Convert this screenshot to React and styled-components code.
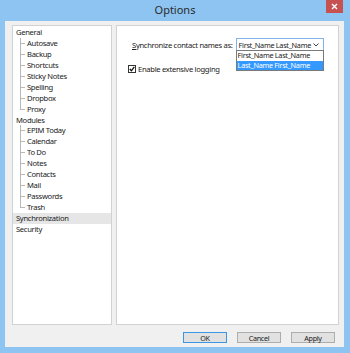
import styled, { createGlobalStyle } from "styled-components";

const Global = createGlobalStyle`
  html, body { margin: 0; padding: 0; }
  body {
    width: 350px;
    height: 353px;
    overflow: hidden;
    font-family: "Noto Sans", "Open Sans", sans-serif;
  }
`;

const Window = styled.div`
  width: 350px;
  height: 353px;
  background: #8dc4f1;
  display: flex;
  flex-direction: column;
  box-sizing: border-box;
  position: relative;
`;

const TitleBar = styled.div`
  height: 21px;
  display: flex;
  align-items: center;
  justify-content: center;
  font-size: 11px;
  color: #2b2b2b;
  padding-bottom: 3px;
  box-sizing: border-box;
`;

const CloseButton = styled.div`
  position: absolute;
  top: 0;
  right: 7px;
  width: 17px;
  height: 13px;
  background: #c75050;
  display: flex;
  align-items: center;
  justify-content: center;
`;

const Body = styled.div`
  flex: 1;
  margin: 0 6px 6px 5px;
  background: #f0f0f0;
  display: flex;
  flex-direction: column;
  padding: 4px 5px 4px 7px;
  box-sizing: border-box;
  font-size: 7.6px;
  letter-spacing: -0.3px;
  color: #1a1a1a;
`;

const Panels = styled.div`
  display: flex;
  gap: 4px;
  height: 300px;
`;

const TreePanel = styled.div`
  width: 100px;
  background: #fff;
  border: 1px solid #d2d2d2;
  box-sizing: border-box;
  padding-top: 1px;
`;

const TreeItem = styled.div`
  height: 10.95px;
  line-height: 10.95px;
  padding-left: ${(p) => (p.$child ? 14 : 3)}px;
  background: ${(p) => (p.$selected ? "#e6e6e6" : "transparent")};
  position: relative;
  white-space: nowrap;

  &::before {
    content: ${(p) => (p.$child ? '""' : "none")};
    position: absolute;
    left: 7px;
    top: 5px;
    width: 5px;
    border-top: 1px solid #b8b8b8;
  }
  &::after {
    content: ${(p) => (p.$child ? '""' : "none")};
    position: absolute;
    left: 7px;
    top: 0;
    height: ${(p) => (p.$last ? "5px" : "100%")};
    border-left: 1px solid #b8b8b8;
  }
`;

const ContentPanel = styled.div`
  flex: 1;
  background: #fff;
  border: 1px solid #d2d2d2;
  box-sizing: border-box;
  padding: 12px 0 0 11px;
  display: flex;
  flex-direction: column;
  gap: 13px;
`;

const SyncRow = styled.div`
  display: flex;
  align-items: center;
  gap: 3px;
  padding-left: 4px;
`;

const Label = styled.span`
  white-space: nowrap;
`;

const Key = styled.span`
  text-decoration: underline;
`;

const SelectWrap = styled.div`
  position: relative;
  font-size: 7.3px;
`;

const SelectBox = styled.div`
  width: 88px;
  height: 13px;
  box-sizing: border-box;
  border: 1px solid #7eb4ea;
  background: #fff;
  display: flex;
  align-items: center;
  justify-content: space-between;
  padding: 0 4px 0 2px;
  white-space: nowrap;
`;

const DropList = styled.div`
  position: absolute;
  top: 12px;
  left: 0;
  width: 88px;
  box-sizing: border-box;
  border: 1px solid #7a7a7a;
  background: #fff;
`;

const Option = styled.div`
  height: 9.5px;
  line-height: 9.5px;
  padding-left: 1px;
  white-space: nowrap;
  background: ${(p) => (p.$active ? "#3399ff" : "#fff")};
  color: ${(p) => (p.$active ? "#fff" : "#1a1a1a")};
`;

const CheckRow = styled.div`
  display: flex;
  align-items: center;
  gap: 2px;
`;

const Box = styled.div`
  width: 8px;
  height: 8px;
  box-sizing: border-box;
  border: 1px solid #333;
  background: #fff;
  display: flex;
  align-items: center;
  justify-content: center;
`;

const Buttons = styled.div`
  display: flex;
  justify-content: flex-end;
  gap: 10px;
  margin-top: 7px;
  padding-right: 4px;
`;

const Button = styled.div`
  width: 44px;
  height: 11px;
  box-sizing: border-box;
  border: 1px solid ${(p) => (p.$default ? "#3c96e6" : "#adadad")};
  background: #e1e1e1;
  display: flex;
  align-items: center;
  justify-content: center;
  font-size: 7.2px;
`;

const tree = [
  { label: "General" },
  { label: "Autosave", child: true },
  { label: "Backup", child: true },
  { label: "Shortcuts", child: true },
  { label: "Sticky Notes", child: true },
  { label: "Spelling", child: true },
  { label: "Dropbox", child: true },
  { label: "Proxy", child: true, last: true },
  { label: "Modules" },
  { label: "EPIM Today", child: true },
  { label: "Calendar", child: true },
  { label: "To Do", child: true },
  { label: "Notes", child: true },
  { label: "Contacts", child: true },
  { label: "Mail", child: true },
  { label: "Passwords", child: true },
  { label: "Trash", child: true, last: true },
  { label: "Synchronization", selected: true },
  { label: "Security" },
];

const App = () => {
  return (
    <Window>
      <Global />
      <TitleBar>Options</TitleBar>
      <CloseButton>
        <svg width="7" height="7" viewBox="0 0 7 7">
          <path d="M1 1 L6 6 M6 1 L1 6" stroke="#fff" strokeWidth="1.4" />
        </svg>
      </CloseButton>
      <Body>
        <Panels>
          <TreePanel>
            {tree.map((t) => (
              <TreeItem key={t.label} $child={t.child} $last={t.last} $selected={t.selected}>
                {t.label}
              </TreeItem>
            ))}
          </TreePanel>
          <ContentPanel>
            <SyncRow>
              <Label>
                <Key>S</Key>ynchronize contact names as:
              </Label>
              <SelectWrap>
                <SelectBox>
                  <span>First_Name Last_Name</span>
                  <svg width="6" height="4" viewBox="0 0 6 4">
                    <path d="M0.5 0.5 L3 3 L5.5 0.5" stroke="#444" strokeWidth="1" fill="none" />
                  </svg>
                </SelectBox>
                <DropList>
                  <Option>First_Name Last_Name</Option>
                  <Option $active>Last_Name First_Name</Option>
                </DropList>
              </SelectWrap>
            </SyncRow>
            <CheckRow>
              <Box>
                <svg width="6" height="6" viewBox="0 0 6 6">
                  <path d="M0.8 3 L2.4 4.8 L5.3 0.8" stroke="#111" strokeWidth="1.3" fill="none" />
                </svg>
              </Box>
              <span>Enable extensive logging</span>
            </CheckRow>
          </ContentPanel>
        </Panels>
        <Buttons>
          <Button $default>OK</Button>
          <Button>Cancel</Button>
          <Button>Apply</Button>
        </Buttons>
      </Body>
    </Window>
  );
};

export default App;
